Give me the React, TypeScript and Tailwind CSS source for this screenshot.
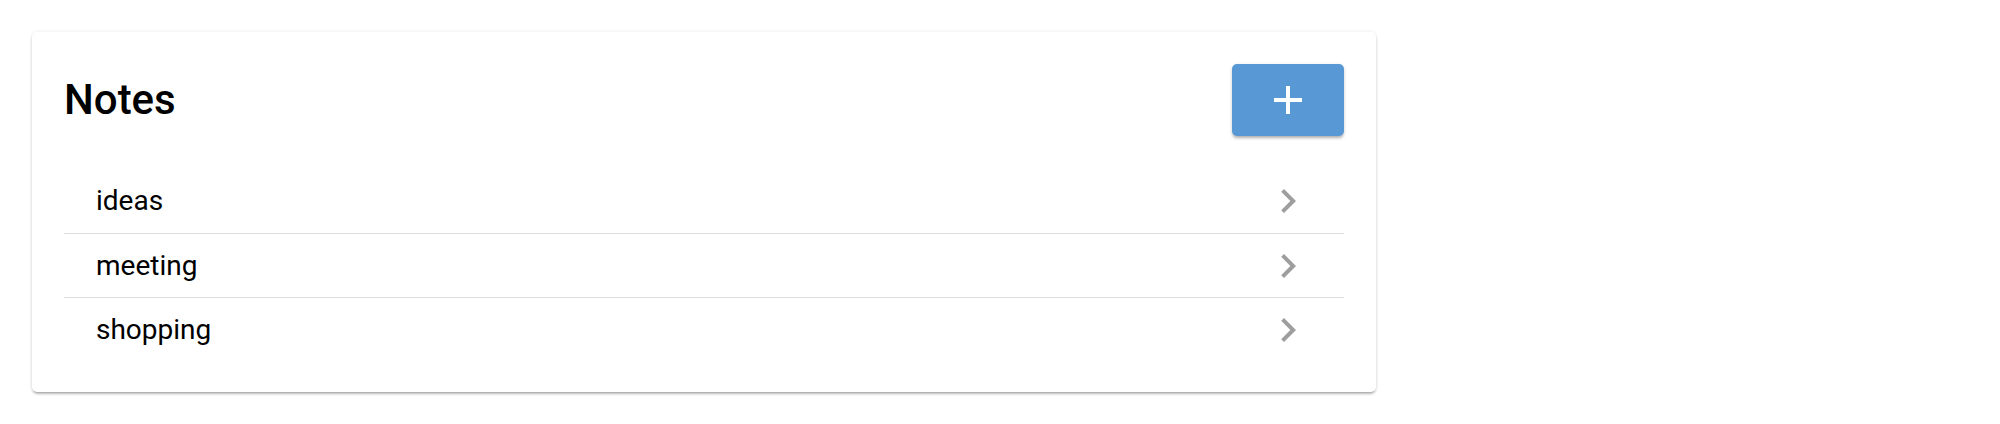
import React from "react";

const notes = ["ideas", "meeting", "shopping"];

function ChevronRight() {
  return (
    <svg width="48" height="48" viewBox="0 0 24 24" fill="#9e9e9e">
      <path d="M10 6L8.59 7.41 13.17 12l-4.58 4.59L10 18l6-6z" />
    </svg>
  );
}

function PlusIcon() {
  return (
    <svg width="48" height="48" viewBox="0 0 24 24" fill="#ffffff">
      <path d="M19 13h-6v6h-2v-6H5v-2h6V5h2v6h6v2z" />
    </svg>
  );
}

export default function App() {
  return (
    <div className="min-h-[424px] bg-white p-8 font-['Roboto',sans-serif]">
      <div className="w-[1344px] rounded-[5px] bg-white px-8 pt-8 pb-[31px] shadow-[0_3px_3px_-2px_rgba(0,0,0,0.3),0_2px_3px_rgba(0,0,0,0.12),0_0_4px_rgba(0,0,0,0.08)]">
        <div className="flex h-[72px] items-center justify-between">
          <h1 className="text-[42px] font-medium leading-none text-black">Notes</h1>
          <button className="flex h-[72px] w-[112px] items-center justify-center rounded-[5px] bg-[#5898d4] shadow-[0_3px_3px_-1px_rgba(0,0,0,0.25),0_1px_4px_rgba(0,0,0,0.12)]">
            <PlusIcon />
          </button>
        </div>
        <ul className="mt-[33px]">
          {notes.map((note, i) => (
            <li
              key={note}
              className={
                i > 0
                  ? "flex h-16 items-center justify-between border-t border-[#dcdcdc] px-8"
                  : "flex h-16 items-center justify-between px-8"
              }
            >
              <span className="text-[28px] leading-8 text-black">{note}</span>
              <ChevronRight />
            </li>
          ))}
        </ul>
      </div>
    </div>
  );
}
